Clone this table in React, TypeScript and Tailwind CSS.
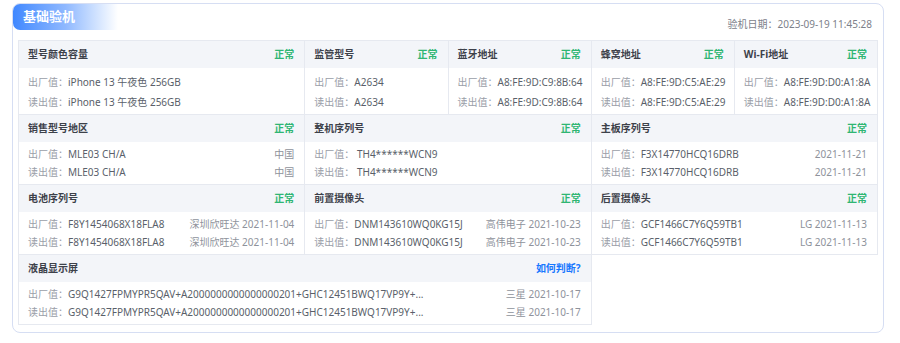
import React from "react";

type Item = {
  title: string;
  span: 1 | 2 | 4;
  status?: "ok" | "help";
  factory: string;
  read: string;
  extra?: string;
  tall?: boolean;
};

const rows: Item[][] = [
  [
    { title: "型号颜色容量", span: 2, status: "ok", factory: "iPhone 13 午夜色 256GB", read: "iPhone 13 午夜色 256GB", tall: true },
    { title: "监管型号", span: 1, status: "ok", factory: "A2634", read: "A2634", tall: true },
    { title: "蓝牙地址", span: 1, status: "ok", factory: "A8:FE:9D:C9:8B:64", read: "A8:FE:9D:C9:8B:64", tall: true },
    { title: "蜂窝地址", span: 1, status: "ok", factory: "A8:FE:9D:C5:AE:29", read: "A8:FE:9D:C5:AE:29", tall: true },
    { title: "Wi-Fi地址", span: 1, status: "ok", factory: "A8:FE:9D:D0:A1:8A", read: "A8:FE:9D:D0:A1:8A", tall: true },
  ],
  [
    { title: "销售型号地区", span: 2, status: "ok", factory: "MLE03 CH/A", read: "MLE03 CH/A", extra: "中国" },
    { title: "整机序列号", span: 2, status: "ok", factory: " TH4******WCN9", read: " TH4******WCN9" },
    { title: "主板序列号", span: 2, status: "ok", factory: "F3X14770HCQ16DRB", read: "F3X14770HCQ16DRB", extra: "2021-11-21" },
  ],
  [
    { title: "电池序列号", span: 2, status: "ok", factory: "F8Y1454068X18FLA8", read: "F8Y1454068X18FLA8", extra: "深圳欣旺达 2021-11-04" },
    { title: "前置摄像头", span: 2, status: "ok", factory: "DNM143610WQ0KG15J", read: "DNM143610WQ0KG15J", extra: "高伟电子 2021-10-23" },
    { title: "后置摄像头", span: 2, status: "ok", factory: "GCF1466C7Y6Q59TB1", read: "GCF1466C7Y6Q59TB1", extra: "LG 2021-11-13" },
  ],
  [
    {
      title: "液晶显示屏",
      span: 4,
      status: "help",
      factory: "G9Q1427FPMYPR5QAV+A2000000000000000201+GHC12451BWQ17VP9Y+...",
      read: "G9Q1427FPMYPR5QAV+A2000000000000000201+GHC12451BWQ17VP9Y+...",
      extra: "三星 2021-10-17",
    },
  ],
];

const spanClass = { 1: "col-span-1", 2: "col-span-2", 4: "col-span-4" };

function Line({ label, value, extra, tall }: { label: string; value: string; extra?: string; tall?: boolean }) {
  return (
    <div className={`flex justify-between whitespace-pre ${tall ? "leading-[20px]" : "leading-[18px]"}`}>
      <span>
        <span className="text-[#9a9ea8]">{label}</span>
        <span className="text-[#5a5f6a]">{value}</span>
      </span>
      {extra ? <span className="text-[#8e929b]">{extra}</span> : null}
    </div>
  );
}

function Cell({ item }: { item: Item }) {
  return (
    <div className={`${spanClass[item.span]} border-r border-b border-[#e6e9f0]`}>
      <div className="flex h-[27px] items-center justify-between bg-[#f3f5f9] pl-[9px] pr-[10px]">
        <span className="font-bold text-[#3d414a]">{item.title}</span>
        {item.status === "ok" ? (
          <span className="font-bold text-[#2fb673]">正常</span>
        ) : (
          <span className="font-bold text-[#1677ff]">如何判断?</span>
        )}
      </div>
      <div className={`pl-[9px] pr-[10px] ${item.tall ? "pt-[4px] pb-[2px]" : "pt-[3px] pb-[3px]"}`}>
        <Line label="出厂值：" value={item.factory} extra={item.extra} tall={item.tall} />
        <Line label="读出值：" value={item.read} extra={item.extra} tall={item.tall} />
      </div>
    </div>
  );
}

export default function App() {
  return (
    <div
      className="h-[343px] w-[900px] bg-white pt-[3px] pl-[12px] text-[10px]"
      style={{ fontFamily: '"Noto Sans", "Noto Sans CJK SC", sans-serif' }}
    >
      <div className="w-[872px] rounded-[8px] border border-[#d6def3] bg-white pb-[7px]">
        <div className="flex items-start justify-between">
          <div className="flex h-[26px] w-[105px] items-center rounded-tl-[7px] rounded-bl-[7px] bg-gradient-to-r from-[#4088ff] via-[#8fb8ff] to-white pl-[10px] text-[13px] font-bold text-white">
            基础验机
          </div>
          <div className="mt-[12px] mr-[11px] leading-4 text-[#7d818a]">验机日期：2023-09-19 11:45:28</div>
        </div>
        <div className="mx-[5px] mt-[8px] grid grid-cols-6 border-t border-l border-[#e6e9f0]">
          {rows.flat().map((item) => (
            <Cell key={item.title} item={item} />
          ))}
        </div>
      </div>
    </div>
  );
}
